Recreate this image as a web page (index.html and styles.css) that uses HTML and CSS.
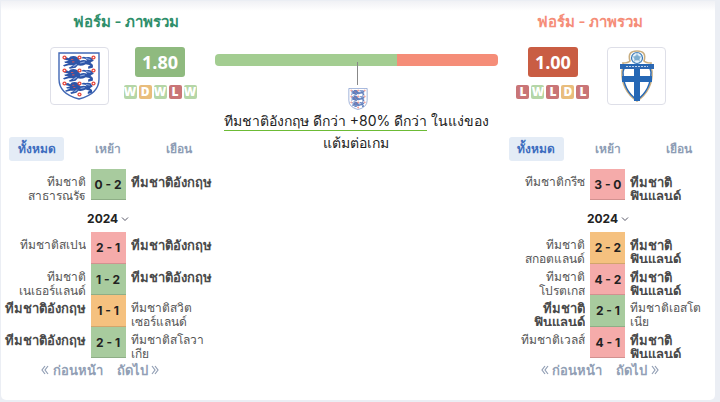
FILE: index.html
```html
<!DOCTYPE html>
<html lang="th">
<head>
    <meta charset="UTF-8">
    <title>ฟอร์ม - ภาพรวม</title>
    <link rel="stylesheet" href="styles.css">
</head>
<body>
    <!-- shared crests and icons -->
    <svg class="sprite" aria-hidden="true">
        <symbol id="lion" viewBox="0 0 28 12" preserveAspectRatio="none">
            <path d="M1 3Q0 1 3 1L5 2Q6 0 9 0Q13 0 14 3L15 4Q18 3 21 4Q20 2 16 2Q17 0 20 1Q25 0 26 3Q28 4 25 5L24 6Q27 7 26 10L22 11V9L24 8L20 7Q16 9 13 8L11 10L6 11L5 10L9 8L5 8L1 9L0 8L5 6L2 6L1 5L5 4Z" fill="#2c55a8"/>
            <path d="M15 6L19 5M9 9L12 7M20 2L24 3" stroke="#8ea9dc" fill="none"/>
            <path d="M7 3H9M8 5H10" stroke="#c7525f"/>
        </symbol>
        <symbol id="rose" viewBox="0 0 6 6">
            <circle cx="3" cy="3" r="2.5" fill="#e5483d"/>
            <circle cx="3" cy="3" r="1" fill="#fff"/>
        </symbol>
        <symbol id="england" viewBox="0 0 42 48">
            <path d="M1 1H41V27Q41 42 21 47Q1 42 1 27Z" fill="#fff" stroke="#4268b5" stroke-width="1.4"/>
            <use href="#lion" x="5" y="4" width="32" height="14"/>
            <use href="#lion" x="5" y="17" width="32" height="14"/>
            <use href="#lion" x="7" y="30" width="29" height="13"/>
            <use href="#rose" x="4" y="3" width="5" height="5"/>
            <use href="#rose" x="19" y="3" width="5" height="5"/>
            <use href="#rose" x="33" y="3" width="5" height="5"/>
            <use href="#rose" x="4" y="16" width="5" height="5"/>
            <use href="#rose" x="19" y="16" width="5" height="5"/>
            <use href="#rose" x="33" y="16" width="5" height="5"/>
            <use href="#rose" x="4" y="29" width="5" height="5"/>
            <use href="#rose" x="19" y="29" width="5" height="5"/>
            <use href="#rose" x="33" y="29" width="5" height="5"/>
            <use href="#rose" x="19" y="40" width="5" height="5"/>
        </symbol>
        <symbol id="finland" viewBox="0 0 34 52">
            <path d="M3 13Q8 13 10 11Q7 1 17 1Q27 1 24 11Q26 13 31 13Q30 18 32 21Q33 40 17 51Q1 40 2 21Q4 18 3 13Z" fill="#fff" stroke="#c9ae80" stroke-width="1.6"/>
            <clipPath id="shield"><path d="M4 15H30Q29 18 31 22Q31 40 17 50Q3 40 3 22Q5 18 4 15Z"/></clipPath>
            <g clip-path="url(#shield)">
                <rect y="14" width="34" height="5" fill="#2d68b2"/>
                <path d="M6 16.500H28" stroke="#bdd1e9" stroke-dasharray="2 1"/>
                <path d="M17 19V51M2 29H32" stroke="#2567b5" stroke-width="6"/>
            </g>
            <path d="M4 15H30Q29 18 31 22Q31 40 17 50Q3 40 3 22Q5 18 4 15Z" fill="none" stroke="#2567b5" stroke-width="1.4"/>
            <circle cx="17" cy="8" r="5.500" fill="#e5f1fa" stroke="#3978b7" stroke-width="1.2"/>
            <path d="M17 5L20 7L19 10H15L14 7ZM17 2V5M20 7L23 6M19 10L21 13M15 10L13 13M14 7L11 6" fill="#7daed0" stroke="#7daed0" stroke-width=".7"/>
        </symbol>
        <symbol id="down" viewBox="0 0 8 8">
            <path d="M1 2.500L4 5.500L7 2.500" fill="none" stroke="#555566"/>
        </symbol>
        <symbol id="prev" viewBox="0 0 8 10">
            <path d="M4 1L1 5L4 9M7 1L4 5L7 9" fill="none" stroke="currentColor" stroke-width="1.2"/>
        </symbol>
        <symbol id="next" viewBox="0 0 8 10">
            <path d="M1 1L4 5L1 9M4 1L7 5L4 9" fill="none" stroke="currentColor" stroke-width="1.2"/>
        </symbol>
    </svg>

    <main class="card">
        <section class="team">
            <h2 class="title title-home">ฟอร์ม - ภาพรวม</h2>
            <div class="summary">
                <a class="crest" href="#" aria-label="ทีมชาติอังกฤษ"><svg class="crest-england"><use href="#england"/></svg></a>
                <div class="rating-box">
                    <div class="rating rating-high">1.80</div>
                    <div class="form">
                        <span class="win">W</span><span class="draw">D</span><span class="win">W</span><span class="loss">L</span><span class="win">W</span>
                    </div>
                </div>
            </div>
            <div class="tabs">
                <button class="tab active">ทั้งหมด</button>
                <button class="tab">เหย้า</button>
                <button class="tab">เยือน</button>
            </div>
            <table class="results">
                <tr><td class="home"><div class="name">ทีมชาติ<br>สาธารณรัฐ</div></td><td class="score green">0 - 2</td><td class="away"><div class="name own">ทีมชาติอังกฤษ</div></td></tr>
            </table>
            <button class="season">2024 <svg><use href="#down"/></svg></button>
            <table class="results results-season">
                <tr><td class="home"><div class="name">ทีมชาติสเปน</div></td><td class="score red">2 - 1</td><td class="away"><div class="name own">ทีมชาติอังกฤษ</div></td></tr>
                <tr><td class="home"><div class="name">ทีมชาติ<br>เนเธอร์แลนด์</div></td><td class="score green">1 - 2</td><td class="away"><div class="name own">ทีมชาติอังกฤษ</div></td></tr>
                <tr><td class="home"><div class="name own">ทีมชาติอังกฤษ</div></td><td class="score orange">1 - 1</td><td class="away"><div class="name">ทีมชาติสวิต<br>เซอร์แลนด์</div></td></tr>
                <tr><td class="home"><div class="name own">ทีมชาติอังกฤษ</div></td><td class="score green">2 - 1</td><td class="away"><div class="name">ทีมชาติสโลวา<br>เกีย</div></td></tr>
            </table>
            <nav class="pager">
                <a href="#"><svg><use href="#prev"/></svg> ก่อนหน้า</a>
                <a href="#">ถัดไป <svg><use href="#next"/></svg></a>
            </nav>
        </section>

        <section class="compare">
            <div class="bar">
                <div class="bar-home" style="width: 64.5%"></div>
                <div class="bar-away"></div>
            </div>
            <div class="marker">
                <div class="pointer"></div>
                <svg class="mini-crest"><use href="#england"/></svg>
            </div>
            <p class="verdict"><span class="better">ทีมชาติอังกฤษ ดีกว่า +80% ดีกว่า</span> ในแง่ของ<br>แต้มต่อเกม</p>
        </section>

        <section class="team team-away">
            <h2 class="title title-away">ฟอร์ม - ภาพรวม</h2>
            <div class="summary">
                <a class="crest" href="#" aria-label="ทีมชาติฟินแลนด์"><svg class="crest-finland"><use href="#finland"/></svg></a>
                <div class="rating-box">
                    <div class="rating rating-low">1.00</div>
                    <div class="form">
                        <span class="loss">L</span><span class="win">W</span><span class="loss">L</span><span class="draw">D</span><span class="loss">L</span>
                    </div>
                </div>
            </div>
            <div class="tabs">
                <button class="tab active">ทั้งหมด</button>
                <button class="tab">เหย้า</button>
                <button class="tab">เยือน</button>
            </div>
            <table class="results">
                <tr><td class="home"><div class="name">ทีมชาติกรีซ</div></td><td class="score red">3 - 0</td><td class="away"><div class="name own">ทีมชาติ<br>ฟินแลนด์</div></td></tr>
            </table>
            <button class="season">2024 <svg><use href="#down"/></svg></button>
            <table class="results results-season">
                <tr><td class="home"><div class="name">ทีมชาติ<br>สกอตแลนด์</div></td><td class="score orange">2 - 2</td><td class="away"><div class="name own">ทีมชาติ<br>ฟินแลนด์</div></td></tr>
                <tr><td class="home"><div class="name">ทีมชาติ<br>โปรตุเกส</div></td><td class="score red">4 - 2</td><td class="away"><div class="name own">ทีมชาติ<br>ฟินแลนด์</div></td></tr>
                <tr><td class="home"><div class="name own">ทีมชาติ<br>ฟินแลนด์</div></td><td class="score green">2 - 1</td><td class="away"><div class="name">ทีมชาติเอสโต<br>เนีย</div></td></tr>
                <tr><td class="home"><div class="name">ทีมชาติเวลส์</div></td><td class="score red">4 - 1</td><td class="away"><div class="name own">ทีมชาติ<br>ฟินแลนด์</div></td></tr>
            </table>
            <nav class="pager">
                <a href="#"><svg><use href="#prev"/></svg> ก่อนหน้า</a>
                <a href="#">ถัดไป <svg><use href="#next"/></svg></a>
            </nav>
        </section>
    </main>
</body>
</html>
```

FILE: styles.css
```css
* {
    box-sizing: border-box;
}
body {
    margin: 0;
    padding: 1px 5px 0 1px;
    background: #ebeef4;
    font-family: Inter, "Open Sans", sans-serif;
    color: #222;
}
button {
    font-family: inherit;
    border: 0;
    background: none;
    padding: 0;
    cursor: pointer;
}
a {
    color: inherit;
    text-decoration: none;
}
.sprite {
    display: none;
}
.card {
    display: grid;
    grid-template-columns: 3fr 4fr 3fr;
    background: linear-gradient(#f0f1f5, #fff 10px);
    border-radius: 0 0 5px 5px;
    padding-bottom: 18px;
}

/* team header */
.team {
    display: flex;
    flex-direction: column;
    min-width: 0;
}
.title {
    margin: 11px 0 15px;
    padding-left: 36px;
    font-size: 15px;
    line-height: 20px;
    font-weight: 600;
    text-align: center;
}
.team-away .title {
    padding: 0 36px 0 0;
}
.title-home {
    color: #2f8f6b;
}
.title-away {
    color: #f58d78;
}
.summary {
    display: flex;
    justify-content: center;
    gap: 15px;
    padding-left: 30px;
}
.team-away .summary {
    flex-direction: row-reverse;
    gap: 18px;
    padding: 0 33px 0 0;
}
.crest {
    display: flex;
    align-items: center;
    justify-content: center;
    width: 59px;
    height: 58px;
    border: 1px solid #dedfe8;
    border-radius: 4px;
}
.crest-england {
    width: 42px;
    height: 48px;
}
.crest-finland {
    width: 34px;
    height: 52px;
}
.rating-box {
    display: flex;
    flex-direction: column;
    align-items: center;
    gap: 8px;
}
.rating {
    width: 50px;
    padding-top: 1px;
    border-radius: 3px;
    color: #fff;
    font-family: "Open Sans", sans-serif;
    font-size: 18px;
    line-height: 29px;
    font-weight: 700;
    text-align: center;
}
.rating-high {
    background: #8fba7f;
}
.rating-low {
    background: #c95d43;
}
.form {
    display: flex;
    gap: 2px;
}
.form span {
    width: 13px;
    border-radius: 2px;
    color: #fff;
    font-family: "Open Sans", sans-serif;
    font-size: 12px;
    line-height: 14px;
    font-weight: 800;
    display: flex;
    justify-content: center;
}
.win {
    background: #b5d6a7;
}
.draw {
    background: #e9bd7c;
}
.loss {
    background: #c97577;
}

/* tabs */
.tabs {
    display: grid;
    grid-template-columns: repeat(3, 1fr);
    padding-top: 32px;
}
.tab {
    margin: 0 8px;
    border-radius: 3px;
    color: #8e9db5;
    font-size: 12px;
    line-height: 24px;
    font-weight: 600;
}
.tab.active {
    background: #e4ecf6;
    color: #3e6dbf;
}

/* match results */
.results {
    width: 100%;
    margin-top: 8px;
    border-collapse: collapse;
    table-layout: fixed;
    font-size: 12px;
}
.results-season {
    height: 126px;
    margin-top: 3px;
}
.results td {
    padding: 0;
    vertical-align: top;
}
.results .home {
    padding-right: 5px;
}
.results .away {
    padding-left: 5px;
}
.name {
    height: 31px;
    padding-top: 6px;
    overflow: hidden;
    white-space: nowrap;
    line-height: 14px;
    color: #555;
}
.own {
    color: #4a4a4a;
    font-size: 13px;
    font-weight: 600;
}
.home .name {
    text-align: right;
}
.results .score {
    width: 35px;
    vertical-align: middle;
    text-align: center;
    font-weight: 700;
    color: #222;
}
.green {
    background: #a8cb9e;
    box-shadow: inset 0 -1px #8eae86;
}
.red {
    background: #f5abaa;
    box-shadow: inset 0 -1px #d29190;
}
.orange {
    background: #f5c17f;
    box-shadow: inset 0 -1px #d2a56c;
}
.season {
    align-self: center;
    margin-top: 8px;
    font-size: 12px;
    line-height: 21px;
    font-weight: 700;
    color: #222;
}
.season svg {
    width: 8px;
    height: 8px;
}
.pager {
    display: flex;
    justify-content: center;
    gap: 14px;
    padding-right: 16px;
    color: #929fb5;
    font-size: 13px;
    line-height: 24px;
    font-weight: 600;
}
.pager svg {
    width: 8px;
    height: 10px;
}

/* comparison */
.compare {
    padding: 53px 3px 0 0;
}
.bar {
    display: flex;
    height: 12px;
    border-radius: 4px;
    overflow: hidden;
}
.bar-home {
    background: #a3cd91;
}
.bar-away {
    flex: 1;
    background: #f58d78;
}
.marker {
    display: flex;
    flex-direction: column;
    align-items: center;
    gap: 3px;
    margin-top: -4px;
    padding-left: 3px;
}
.pointer {
    width: 1px;
    height: 23px;
    background: #888;
    z-index: 1;
}
.mini-crest {
    width: 20px;
    height: 22px;
    opacity: .75;
}
.verdict {
    margin: 0;
    font-size: 14px;
    line-height: 22px;
    text-align: center;
}
.better {
    padding-bottom: 1px;
    border-bottom: 1px solid #6cbb35;
}
```
